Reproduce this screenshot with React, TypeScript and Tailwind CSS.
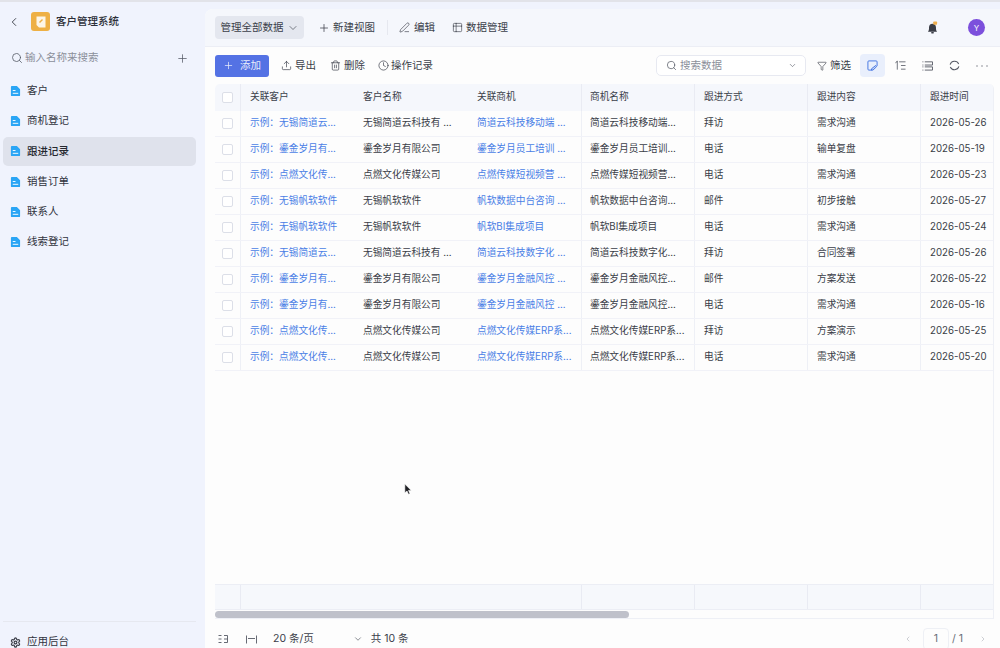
import { FC, ReactNode } from "react";
import {
  ChevronDown,
  ChevronLeft,
  ChevronRight,
  Clock,
  Filter,
  PenLine,
  Plus,
  Search,
  Settings,
  Table2,
  Trash2,
  Upload,
} from "lucide-react";

const navItems = ["客户", "商机登记", "跟进记录", "销售订单", "联系人", "线索登记"];

const columns = ["关联客户", "客户名称", "关联商机", "商机名称", "跟进方式", "跟进内容", "跟进时间"];

const rows = [
  ["示例：无锡简道云...", "无锡简道云科技有 ...", "简道云科技移动端 ...", "简道云科技移动端...", "拜访", "需求沟通", "2026-05-26"],
  ["示例：鎏金岁月有...", "鎏金岁月有限公司", "鎏金岁月员工培训 ...", "鎏金岁月员工培训...", "电话", "输单复盘", "2026-05-19"],
  ["示例：点燃文化传...", "点燃文化传媒公司", "点燃传媒短视频营 ...", "点燃传媒短视频营...", "电话", "需求沟通", "2026-05-23"],
  ["示例：无锡帆软软件", "无锡帆软软件", "帆软数据中台咨询 ...", "帆软数据中台咨询...", "邮件", "初步接触", "2026-05-27"],
  ["示例：无锡帆软软件", "无锡帆软软件", "帆软BI集成项目", "帆软BI集成项目", "电话", "需求沟通", "2026-05-24"],
  ["示例：无锡简道云...", "无锡简道云科技有 ...", "简道云科技数字化 ...", "简道云科技数字化...", "拜访", "合同签署", "2026-05-26"],
  ["示例：鎏金岁月有...", "鎏金岁月有限公司", "鎏金岁月金融风控 ...", "鎏金岁月金融风控...", "邮件", "方案发送", "2026-05-22"],
  ["示例：鎏金岁月有...", "鎏金岁月有限公司", "鎏金岁月金融风控 ...", "鎏金岁月金融风控...", "电话", "需求沟通", "2026-05-16"],
  ["示例：点燃文化传...", "点燃文化传媒公司", "点燃文化传媒ERP系...", "点燃文化传媒ERP系...", "拜访", "方案演示", "2026-05-25"],
  ["示例：点燃文化传...", "点燃文化传媒公司", "点燃文化传媒ERP系...", "点燃文化传媒ERP系...", "电话", "需求沟通", "2026-05-20"],
];

const gridCols = "grid grid-cols-[26px_113px_114px_114px_113px_113px_113px_73px]";

const DocIcon: FC = () => (
  <svg viewBox="0 0 12 12" className="w-[11px] h-[12px] shrink-0">
    <path d="M2 0.5h5.5L11 4v6.5a1 1 0 0 1-1 1H2a1 1 0 0 1-1-1v-9a1 1 0 0 1 1-1z" fill="#2aa5f5" />
    <rect x="3" y="5" width="3" height="1" fill="#fff" />
    <rect x="3" y="8" width="6" height="1" fill="#fff" />
  </svg>
);

const Checkbox: FC = () => (
  <div className="w-[11px] h-[11px] rounded-[2px] border border-[#dcdfe8] bg-white" />
);

const ToolButton: FC<{ icon: ReactNode; label: string; className: string }> = ({ icon, label, className }) => (
  <div className={`flex items-center ${className}`}>
    {icon}
    <span>{label}</span>
  </div>
);

const CardIcon: FC = () => (
  <svg viewBox="0 0 12 12" fill="none" stroke="#3c70e0" strokeWidth="1" className="w-[11px] h-[11px]">
    <path d="M5.5 11H2a1 1 0 0 1-1-1V2a1 1 0 0 1 1-1h8a1 1 0 0 1 1 1v4.5" />
    <path d="M5 9.5L9.5 6l1 1.2L6.5 11H5z" fill="#3c70e0" fillOpacity="0.2" />
  </svg>
);

const TreeListIcon: FC = () => (
  <svg viewBox="0 0 12 12" fill="none" stroke="#565a65" strokeWidth="0.9" className="w-[11px] h-[11px]">
    <path d="M4.5 2H11.5M6.5 6H11.5M6.5 10H11.5" />
    <path d="M2.5 1v9.5" />
    <path d="M0.5 3.5L2.5 1" />
  </svg>
);

const RowsIcon: FC = () => (
  <svg viewBox="0 0 12 12" fill="none" stroke="#565a65" strokeWidth="1" className="w-[11px] h-[11px]">
    <path d="M3 2H11.5V5.5H3M3 7.5H11.5V11H3" />
    <path d="M0.5 2H1.5M0.5 5.5H1.5M0.5 7.5H1.5M0.5 11H1.5" />
  </svg>
);

const RingIcon: FC = () => (
  <svg viewBox="0 0 12 12" fill="none" stroke="#565a65" strokeWidth="1.1" className="w-[11px] h-[11px]">
    <path d="M1.2 5A5 5 0 0 1 10.6 4.4M10.8 7A5 5 0 0 1 1.4 7.6" />
  </svg>
);

const DotsIcon: FC = () => (
  <svg viewBox="0 0 12 4" fill="#6a6e79" className="w-[12px] h-[4px]">
    <circle cx="1" cy="2" r="0.7" />
    <circle cx="6" cy="2" r="0.7" />
    <circle cx="11" cy="2" r="0.7" />
  </svg>
);

const BellIcon: FC = () => (
  <svg viewBox="0 0 12 14" className="w-[11px] h-[13px]">
    <path d="M1 11.5c1-1 1.2-2 1.2-4.5C2.2 4.5 3.5 3 6 3s3.8 1.5 3.8 4c0 2.5.2 3.5 1.2 4.5z" fill="#3a3d46" />
    <rect x="4.5" y="12" width="3" height="1.5" rx="0.7" fill="#3a3d46" />
    <rect x="6.8" y="0.5" width="4.2" height="3.6" rx="0.8" fill="#eeae4c" />
  </svg>
);

const RowHeightIcon: FC = () => (
  <svg viewBox="0 0 10 10" fill="none" stroke="#565a65" strokeWidth="0.9" className="w-[10px] h-[10px]">
    <path d="M0.5 1.5H3.5M0.5 5H3.5M0.5 8.5H3.5M6 1.5H9.5V8.5H6M6 5H9.5" />
  </svg>
);

const ColWidthIcon: FC = () => (
  <svg viewBox="0 0 11 9" fill="none" stroke="#565a65" strokeWidth="0.9" className="w-[11px] h-[9px]">
    <path d="M0.5 0.5V8.5M10.5 0.5V8.5M2 3.5H9" />
  </svg>
);

const LogoIcon: FC = () => (
  <svg viewBox="0 0 10 12" className="w-[10px] h-[12px]">
    <path d="M0.5 0.5h9v11H3L0.5 9z" fill="#fdf6e8" />
    <path d="M3.5 6.5L6.5 3.5" stroke="#eeb045" strokeWidth="1.4" />
  </svg>
);

export default function App() {
  return (
    <div
      className="w-[1000px] h-[648px] overflow-hidden flex flex-col bg-[#f0f3fd] text-[10.5px] text-[#30343e]"
      style={{ fontFamily: '"Inter", "Noto Sans CJK SC", sans-serif' }}
    >
      <div className="h-[2px] shrink-0 bg-[#e2e3e9]" />
      <div className="flex-1 flex min-h-0">
        {/* sidebar */}
        <aside className="w-[205px] shrink-0 flex flex-col">
          <div className="h-[37px] mt-[1px] flex items-center pl-[7px]">
            <ChevronLeft className="w-[14px] h-[14px] text-[#3c3f49]" strokeWidth={1.6} />
            <div className="ml-[10px] w-[19px] h-[19px] rounded-[3px] bg-[#eeb045] flex items-center justify-center">
              <LogoIcon />
            </div>
            <span className="ml-[6px] font-medium text-[#2c2f38]">客户管理系统</span>
          </div>
          <div className="h-[22px] mt-[7px] flex items-center pl-[11px] pr-[16px]">
            <Search className="w-[12px] h-[12px] text-[#555a66]" strokeWidth={1.6} />
            <span className="ml-[2px] text-[#8b8f9a]">输入名称来搜索</span>
            <Plus className="ml-auto w-[13px] h-[13px] text-[#555a66]" strokeWidth={1.4} />
          </div>
          <nav className="mt-[7.5px] flex flex-col gap-[1.2px] pl-[3px] pr-[9px]">
            {navItems.map((name) => (
              <div
                key={name}
                className={`h-[29px] rounded-[5px] flex items-center gap-[6px] pl-[7px] ${
                  name === "跟进记录" ? "bg-[#dfe2ec] font-medium text-[#25282f]" : ""
                }`}
              >
                <DocIcon />
                <span>{name}</span>
              </div>
            ))}
          </nav>
          <div className="mt-auto ml-[3px] mr-[9px] h-[27px] border-t border-[#e6e8f0] flex items-center gap-[6px] pl-[7px] pt-[14px]">
            <Settings className="w-[11px] h-[11px] text-[#3c3f49]" strokeWidth={2.6} />
            <span>应用后台</span>
          </div>
        </aside>

        {/* main */}
        <main className="flex-1 min-w-0 flex flex-col bg-[#fdfdfd] rounded-tl-[8px] mt-[7px] overflow-hidden relative">
          <div className="h-[38px] shrink-0 bg-[#f5f7fc] border-b border-[#eceef5] flex items-center pl-[10px] pr-[15px] text-[#3b3f4a]">
            <div className="h-[23px] w-[89px] rounded-[4px] bg-[#e4e7ef] flex items-center justify-center gap-[3px]">
              <span>管理全部数据</span>
              <ChevronDown className="w-[12px] h-[12px]" strokeWidth={1.3} />
            </div>
            <div className="ml-[14px] flex items-center gap-[3px]">
              <Plus className="w-[12px] h-[12px]" strokeWidth={1.5} />
              <span>新建视图</span>
            </div>
            <div className="ml-[12px] h-[15px] w-px bg-[#e6e8ef]" />
            <div className="ml-[11px] flex items-center gap-[4px]">
              <PenLine className="w-[11px] h-[11px]" strokeWidth={1.4} />
              <span>编辑</span>
            </div>
            <div className="ml-[17px] flex items-center gap-[3px]">
              <Table2 className="w-[11px] h-[11px]" strokeWidth={1.4} />
              <span>数据管理</span>
            </div>
            <div className="ml-auto">
              <BellIcon />
            </div>
            <div className="ml-[30px] w-[17px] h-[17px] rounded-full bg-[#7c4fdc] text-white text-[8px] flex items-center justify-center">
              Y
            </div>
          </div>

          <div className="h-[37px] shrink-0 flex items-center pl-[10px] pr-[12px] text-[#3b3f4a]">
            <div className="w-[54px] h-[22px] rounded-[3px] bg-[#5472e4] text-[#e8ecfb] flex items-center justify-center gap-[6px]">
              <Plus className="w-[11px] h-[11px]" strokeWidth={1.6} />
              <span>添加</span>
            </div>
            <ToolButton
              className="ml-[12px] gap-[3px]"
              icon={<Upload className="w-[11px] h-[11px]" strokeWidth={1.5} />}
              label="导出"
            />
            <ToolButton
              className="ml-[14px] gap-[3px]"
              icon={<Trash2 className="w-[11px] h-[11px]" strokeWidth={1.5} />}
              label="删除"
            />
            <ToolButton
              className="ml-[13px] gap-[2px]"
              icon={<Clock className="w-[11px] h-[11px]" strokeWidth={1.5} />}
              label="操作记录"
            />
            <div className="ml-auto w-[150px] h-[21px] rounded-[5px] border border-[#e7e9f1] bg-white flex items-center pl-[9px] pr-[8px]">
              <Search className="w-[11px] h-[11px] text-[#555a66]" strokeWidth={1.6} />
              <span className="ml-[3px] text-[#8b8f9a]">搜索数据</span>
              <ChevronDown className="ml-auto w-[9px] h-[9px] text-[#555a66]" strokeWidth={1.6} />
            </div>
            <div className="ml-[11px] flex items-center gap-[3px]">
              <Filter className="w-[10px] h-[10px]" strokeWidth={1.5} />
              <span>筛选</span>
            </div>
            <div className="ml-[9px] w-[25px] h-[23px] rounded-[4px] bg-[#e9effc] flex items-center justify-center">
              <CardIcon />
            </div>
            <div className="ml-[10px]">
              <TreeListIcon />
            </div>
            <div className="ml-[16px]">
              <RowsIcon />
            </div>
            <div className="ml-[16px]">
              <RingIcon />
            </div>
            <div className="ml-[16px]">
              <DotsIcon />
            </div>
          </div>

          {/* table */}
          <div className="ml-[10px] mr-[6px] h-[535px] shrink-0 flex flex-col border-r border-b border-[#eef0f6] rounded-t-[5px] overflow-hidden text-[9.7px]">
            <div className={`${gridCols} h-[27px] shrink-0 bg-[#f5f7fc]`}>
              <div className="flex items-center justify-center border-r border-[#e9ebf3]">
                <Checkbox />
              </div>
              {columns.map((c, i) => (
                <div
                  key={c}
                  className={`flex items-center text-[#3b3f4a] ${i === 3 ? "pl-[8px]" : "pl-[9px]"} ${
                    i >= 2 && i <= 5 ? "border-r border-[#e9ebf3]" : ""
                  }`}
                >
                  {c}
                </div>
              ))}
            </div>
            {rows.map((row, r) => (
              <div key={r} className={`${gridCols} h-[26px] shrink-0 border-b border-[#f1f2f8]`}>
                <div className="flex items-center justify-center border-r border-[#eef0f6]">
                  <Checkbox />
                </div>
                {row.map((cell, i) => (
                  <div
                    key={i}
                    className={`flex items-center whitespace-nowrap overflow-hidden ${i === 3 ? "pl-[8px]" : "pl-[9px]"} ${
                      i === 0 || i === 2 ? "text-[#4a7fe6]" : "text-[#3a3e48]"
                    } ${i >= 2 && i <= 5 ? "border-r border-[#eef0f6]" : ""}`}
                  >
                    {cell}
                  </div>
                ))}
              </div>
            ))}
            <div className="flex-1 min-h-0" />
            <div className={`${gridCols} h-[26px] shrink-0 bg-[#f6f8fc] border-y border-[#eceef5]`}>
              <div className="border-r border-[#e9ebf3]" />
              <div />
              <div />
              <div className="border-r border-[#e9ebf3]" />
              <div className="border-r border-[#e9ebf3]" />
              <div className="border-r border-[#e9ebf3]" />
              <div className="border-r border-[#e9ebf3]" />
              <div />
            </div>
            <div className="h-[8px] shrink-0 flex items-center">
              <div className="w-[414px] h-[7px] rounded-full bg-[#bfc1ca]" />
            </div>
          </div>

          <div className="flex-1 flex items-center pl-[13px] pr-[13px] pt-[9px] text-[#3b3f4a]">
            <RowHeightIcon />
            <div className="ml-[18px]">
              <ColWidthIcon />
            </div>
            <span className="ml-[16px]">20 条/页</span>
            <ChevronDown className="ml-[39px] w-[10px] h-[10px]" strokeWidth={1.4} />
            <span className="ml-[8px]">共 10 条</span>
            <div className="ml-auto flex items-center text-[#6a6e79]">
              <ChevronLeft className="w-[8px] h-[8px] text-[#a3a6af]" strokeWidth={1.6} />
              <div className="ml-[11px] w-[26px] h-[22px] border border-[#eef0f5] rounded-[4px] flex items-center justify-center">
                1
              </div>
              <span className="ml-[3px]">/ 1</span>
              <ChevronRight className="ml-[16px] w-[8px] h-[8px] text-[#a3a6af]" strokeWidth={1.6} />
            </div>
          </div>

          {/* mouse pointer from the recording */}
          <svg viewBox="0 0 12 14" className="absolute left-[199px] top-[474px] w-[10px] h-[13px]">
            <path d="M1 0.5v10.5l2.6-2.2 1.8 4 1.8-.8-1.8-3.9h3.3z" fill="#1f2024" stroke="#fff" strokeWidth="0.7" />
          </svg>
        </main>
      </div>
    </div>
  );
}
